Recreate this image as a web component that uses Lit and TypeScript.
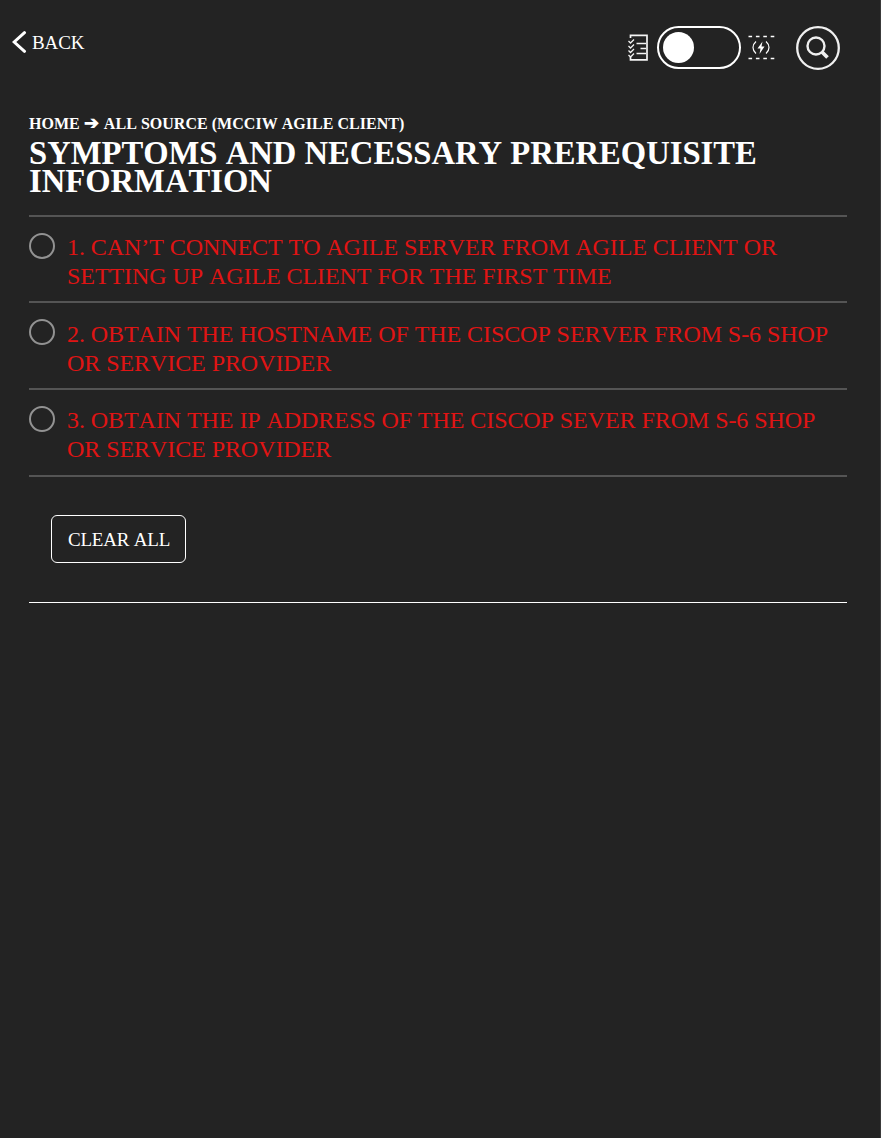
import { LitElement, html, css } from "lit";
import { customElement, state } from "lit/decorators.js";

const STEPS: string[][] = [
  ["1. CAN’T CONNECT TO AGILE SERVER FROM AGILE CLIENT OR", "SETTING UP AGILE CLIENT FOR THE FIRST TIME"],
  ["2. OBTAIN THE HOSTNAME OF THE CISCOP SERVER FROM S-6 SHOP", "OR SERVICE PROVIDER"],
  ["3. OBTAIN THE IP ADDRESS OF THE CISCOP SEVER FROM S-6 SHOP", "OR SERVICE PROVIDER"],
];

@customElement("app-root")
export class AppRoot extends LitElement {
  @state() private checked: boolean[] = STEPS.map(() => false);

  static styles = css`
    :host {
      display: block;
      box-sizing: border-box;
      height: 1138px;
      overflow: hidden;
      background: #232323;
      color: #fff;
      font-family: "Liberation Serif", "Times New Roman", serif;
      font-kerning: none;
      border-right: 1px solid #3a3a3a;
    }
    .top {
      display: flex;
      justify-content: space-between;
      align-items: flex-start;
      height: 115px;
      box-sizing: border-box;
      padding: 26px 40px 0 12px;
    }
    .back {
      display: flex;
      align-items: center;
      gap: 5px;
      margin-top: 5px;
      height: 22px;
      font-size: 19px;
      line-height: 22px;
      white-space: nowrap;
    }
    .back span { padding-top: 2px; letter-spacing: -0.1px; }
    .tools { display: flex; align-items: flex-start; }
    svg { display: block; flex: none; }
    .checklist { margin: 8px 9px 0 0; }
    .toggle {
      box-sizing: border-box;
      width: 84px;
      height: 43px;
      border: 2px solid #fff;
      border-radius: 22px;
      padding: 4px;
    }
    .knob { width: 31px; height: 31px; border-radius: 50%; background: #fff; }
    .flash { margin: 8px 21px 0 6px; }
    main { padding: 0 33px 0 29px; }
    .crumbs {
      font-size: 16px;
      line-height: 18px;
      font-weight: bold;
      letter-spacing: 0.03px;
      white-space: nowrap;
      height: 24px;
    }
    .arrow { display: inline-block; width: 16px; font-size: 18px; line-height: 16px; text-align: center; }
    h1 { margin: 0; font-size: 32.64px; line-height: 28px; height: 76px; white-space: nowrap; }
    .steps { border-top: 2px solid #545454; }
    .step {
      box-sizing: border-box;
      display: flex;
      gap: 12px;
      height: 87px;
      border-bottom: 2px solid #545454;
      padding-top: 16px;
      color: #e01414;
      font-size: 24px;
      letter-spacing: -0.065px;
      line-height: 29px;
      white-space: nowrap;
    }
    .step:first-child { height: 86px; }
    .step:nth-child(2) .label { padding-top: 1px; }
    .ring {
      box-sizing: border-box;
      flex: none;
      width: 26px;
      height: 26px;
      border: 2px solid #929292;
      border-radius: 50%;
    }
    .ring.on { background: #929292; }
    .actions { height: 126px; padding: 38px 22px 0; box-sizing: border-box; border-bottom: 1px solid #fff; }
    button {
      width: 135px;
      height: 48px;
      padding: 2px 0 0 1px;
      border: 1px solid #fff;
      border-radius: 6px;
      background: none;
      color: #fff;
      font: 19px/22px "Liberation Serif", "Times New Roman", serif;
      font-kerning: none;
      letter-spacing: -0.2px;
      white-space: nowrap;
    }
  `;

  private toggle(i: number) {
    this.checked = this.checked.map((v, n) => (n === i ? !v : v));
  }

  private clear() {
    this.checked = STEPS.map(() => false);
  }

  render() {
    return html`
      <header class="top">
        <div class="back">
          <svg width="15" height="22" viewBox="0 0 15 22" fill="none" stroke="#fff" stroke-width="3">
            <path d="M12.5 1.7 2.2 11 12.5 20.3" stroke-linecap="round" />
          </svg>
          <span>BACK</span>
        </div>
        <div class="tools">
          <svg class="checklist" width="20" height="28" viewBox="0 0 20 28" fill="none" stroke="#f4f4f4" stroke-width="1.7">
            <path d="M2.5 4V1.4H19V25.8H2.5V23" />
            <path d="M8.5 9.5H18M12.5 14.5H18M8.5 19.5H18" stroke-width="1.3" />
            <path d="M.5 7 2.5 9 6 5.5M.5 12 2.5 14 6 10.5M.5 16.5 2.5 18.5 6 15M.5 21 2.5 23 6 19.5" stroke-width="1.3" />
          </svg>
          <div class="toggle"><div class="knob"></div></div>
          <svg class="flash" width="28" height="28" viewBox="0 0 28 28" fill="none" stroke="#fff" stroke-width="1.6">
            <path d="M1.5 2.5H27.5M1.5 24.5H27.5" stroke-dasharray="3.6 3.8" />
            <path d="M9 7.5C5 11 5 16 9 19.5M19 7.5C23 11 23 16 19 19.5" stroke-width="1.2" />
            <path d="M15.5 7.5 10.5 14.5H13.5L12.5 20 17.5 12.5H14.5Z" fill="#fff" stroke="none" />
          </svg>
          <svg width="44" height="44" viewBox="0 0 44 44" fill="none" stroke="#f0f0f0">
            <circle cx="22" cy="22" r="20.8" stroke-width="2.3" />
            <circle cx="20" cy="20" r="8.5" stroke-width="2.4" />
            <path d="M26 26 31.5 31.5" stroke-width="3.7" />
          </svg>
        </div>
      </header>
      <main>
        <div class="crumbs">HOME <span class="arrow">➔</span> ALL SOURCE (MCCIW AGILE CLIENT)</div>
        <h1>SYMPTOMS AND NECESSARY PREREQUISITE<br />INFORMATION</h1>
        <div class="steps">
          ${STEPS.map(
            (lines, i) => html`<div class="step" @click=${() => this.toggle(i)}>
              <span class="ring ${this.checked[i] ? "on" : ""}"></span>
              <span class="label">${lines[0]}<br />${lines[1]}</span>
            </div>`
          )}
        </div>
        <div class="actions"><button @click=${this.clear}>CLEAR ALL</button></div>
      </main>
    `;
  }
}
